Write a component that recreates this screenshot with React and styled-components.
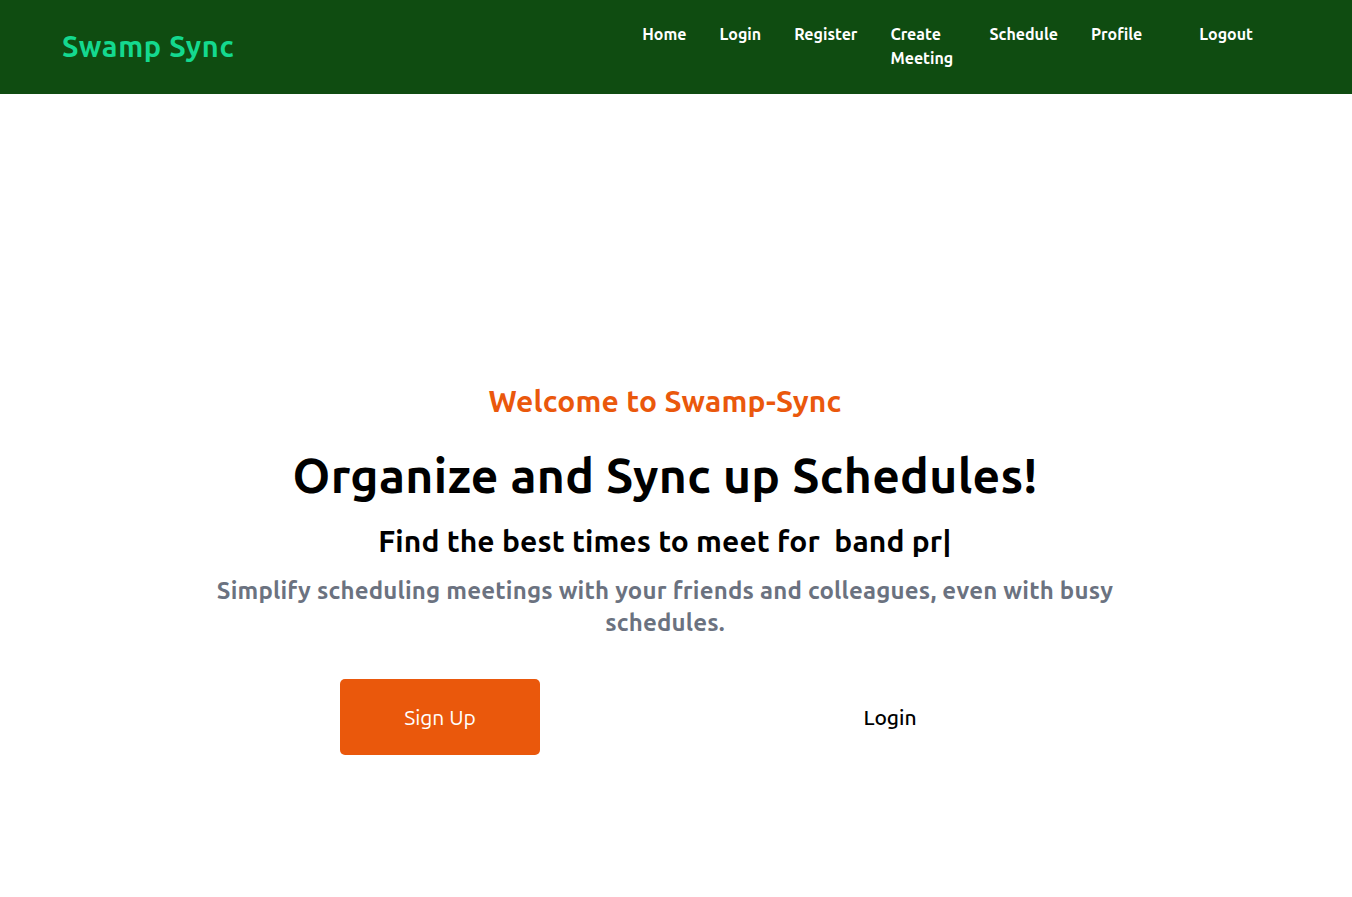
import React from "react";
import styled, { createGlobalStyle } from "styled-components";

const Global = createGlobalStyle`
  html, body { margin: 0; padding: 0; background: #fff; }
  body { font-family: Ubuntu, Lato, "Open Sans", sans-serif; }
  * { box-sizing: border-box; }
`;

const Nav = styled.header`
  height: 94px;
  background: #0f4c11;
  display: flex;
  align-items: flex-start;
  padding: 0 0 0 62px;
`;

const Logo = styled.div`
  color: #14d98f;
  font-size: 29px;
  font-weight: 700;
  line-height: 92px;
  letter-spacing: 0.6px;
`;

const Links = styled.nav`
  margin-left: auto;
  margin-right: 99px;
  padding-top: 22px;
  display: flex;
  align-items: flex-start;
  gap: 33px;
`;

const Link = styled.a`
  color: #fff;
  font-size: 16px;
  font-weight: 700;
  line-height: 24px;
  text-decoration: none;
  max-width: ${(p) => (p.$narrow ? "66px" : "none")};
  margin-left: ${(p) => (p.$push ? "24px" : "0")};
  cursor: pointer;
`;

const Main = styled.main`
  display: flex;
  flex-direction: column;
  align-items: center;
  padding: 287px 22px 0 0;
  text-align: center;
`;

const Welcome = styled.h3`
  margin: 0;
  color: #ea580c;
  font-size: 30px;
  font-weight: 700;
  line-height: 40px;
  letter-spacing: 0.2px;
`;

const Title = styled.h1`
  margin: 26px 0 0;
  color: #000;
  font-size: 48px;
  font-weight: 700;
  line-height: 56px;
  letter-spacing: 0.35px;
`;

const Sub = styled.h2`
  margin: 18px 0 0;
  color: #000;
  font-size: 30px;
  font-weight: 700;
  line-height: 40px;
  letter-spacing: 0.1px;
  white-space: pre;
`;

const Desc = styled.p`
  margin: 14px 0 0;
  max-width: 910px;
  color: #6b7280;
  font-size: 24px;
  font-weight: 700;
  line-height: 32px;
  letter-spacing: 0.2px;
`;

const Buttons = styled.div`
  margin-top: 40px;
  display: flex;
  gap: 250px;
`;

const Button = styled.button`
  width: 200px;
  height: 76px;
  border: none;
  border-radius: 5px;
  background: ${(p) => (p.$primary ? "#ea580c" : "transparent")};
  color: ${(p) => (p.$primary ? "#fff" : "#000")};
  font-family: inherit;
  font-size: 21px;
  font-weight: ${(p) => (p.$primary ? 400 : 500)};
  cursor: pointer;
`;

export default function App() {
  return (
    <>
      <Global />
      <Nav>
        <Logo>Swamp Sync</Logo>
        <Links>
          <Link>Home</Link>
          <Link>Login</Link>
          <Link>Register</Link>
          <Link $narrow>Create Meeting</Link>
          <Link>Schedule</Link>
          <Link>Profile</Link>
          <Link $push>Logout</Link>
        </Links>
      </Nav>
      <Main>
        <Welcome>Welcome to Swamp-Sync</Welcome>
        <Title>Organize and Sync up Schedules!</Title>
        <Sub>Find the best times to meet for  band pr|</Sub>
        <Desc>
          Simplify scheduling meetings with your friends and colleagues, even
          with busy schedules.
        </Desc>
        <Buttons>
          <Button $primary>Sign Up</Button>
          <Button>Login</Button>
        </Buttons>
      </Main>
    </>
  );
}
